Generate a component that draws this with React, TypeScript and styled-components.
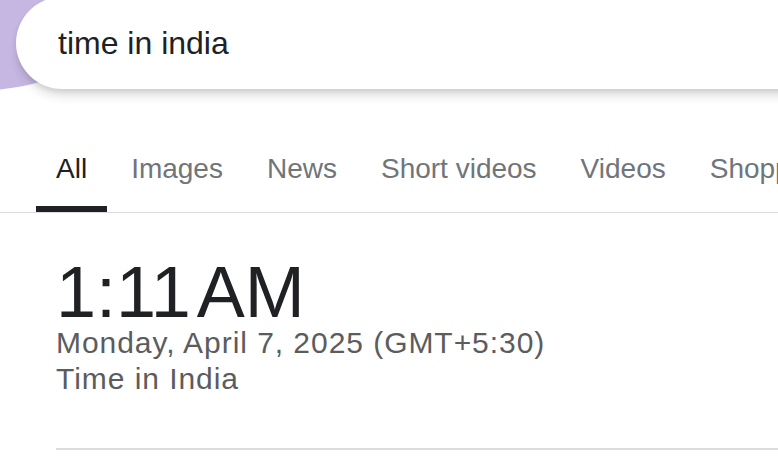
import React from "react";
import styled, { createGlobalStyle } from "styled-components";

const GlobalStyle = createGlobalStyle`
  html, body {
    margin: 0;
    padding: 0;
    background: #ffffff;
    overflow: hidden;
  }
  body {
    font-family: "Liberation Sans", Arial, sans-serif;
  }
  * { box-sizing: border-box; }
`;

const Page = styled.div`
  width: 778px;
  height: 458px;
  overflow: hidden;
  position: relative;
  background: #ffffff;
`;

const Header = styled.header`
  position: relative;
  display: flow-root;
  height: 89px;
`;

const Blob = styled.div`
  position: absolute;
  left: -205px;
  top: -290px;
  width: 380px;
  height: 380px;
  border-radius: 50%;
  background: #c6b6e2;
`;

const SearchBox = styled.div`
  position: relative;
  margin-top: -3px;
  margin-left: 16px;
  width: 900px;
  height: 92px;
  border-radius: 46px;
  background: #ffffff;
  box-shadow: 0 9px 12px -4px rgba(32, 33, 36, 0.2), 0 2px 5px rgba(32, 33, 36, 0.08);
  display: flex;
  align-items: center;
  padding-left: 42px;
`;

const Query = styled.span`
  font-size: 32px;
  color: #202124;
  white-space: nowrap;
`;

const Tabs = styled.nav`
  margin-top: 63px;
  display: flex;
  gap: 4px;
  padding-left: 36px;
  border-bottom: 1px solid #dadce0;
  white-space: nowrap;
`;

const Tab = styled.div<{ $active?: boolean }>`
  height: 60px;
  padding: 1px 20px 0;
  font-size: 28px;
  line-height: 32px;
  color: ${(p) => (p.$active ? "#202124" : "#70757a")};
  border-bottom: 6px solid ${(p) => (p.$active ? "#202124" : "transparent")};
  flex-shrink: 0;
`;

const Result = styled.section`
  padding: 46px 0 0 56px;
`;

const Clock = styled.div`
  font-size: 72px;
  line-height: 66px;
  color: #202124;
  word-spacing: -10px;
  white-space: nowrap;
`;

const Line = styled.div`
  font-size: 30px;
  line-height: 36px;
  letter-spacing: 0.95px;
  color: #5b5c5e;
  white-space: nowrap;
`;

const Divider = styled.hr`
  margin: 51px 0 0;
  border: none;
  border-top: 2px solid #dadce0;
`;

const tabs = ["All", "Images", "News", "Short videos", "Videos", "Shopping"];

export default function App() {
  return (
    <>
      <GlobalStyle />
      <Page>
        <Header>
          <Blob />
          <SearchBox>
            <Query>time in india</Query>
          </SearchBox>
        </Header>
        <Tabs>
          {tabs.map((t, i) => (
            <Tab key={t} $active={i === 0}>
              {t}
            </Tab>
          ))}
        </Tabs>
        <Result>
          <Clock>1:11 AM</Clock>
          <Line>Monday, April 7, 2025 (GMT+5:30)</Line>
          <Line>Time in India</Line>
          <Divider />
        </Result>
      </Page>
    </>
  );
}
